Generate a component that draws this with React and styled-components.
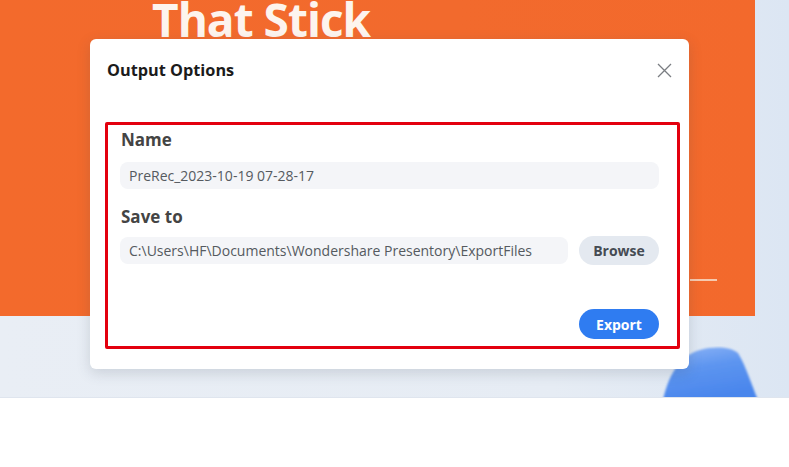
import React from "react";
import styled, { createGlobalStyle } from "styled-components";

const GlobalStyle = createGlobalStyle`
  html, body { margin: 0; padding: 0; background: #ffffff; }
  body { font-family: "Open Sans", "Liberation Sans", sans-serif; }
  * { box-sizing: border-box; }
`;

const Stage = styled.div`
  position: relative;
  width: 789px;
  height: 398px;
  overflow: hidden;
  background: linear-gradient(90deg, #e9eef5 0%, #e6ecf4 70%, #dce6f3 100%);
  border-bottom: 1px solid #dfe5ee;
`;

const Slide = styled.div`
  position: relative;
  width: 755px;
  height: 316px;
  overflow: hidden;
  background: linear-gradient(90deg, #f36a2c 0%, #f26a2d 60%, #f3692c 100%);
  padding-left: 152px;
`;

const Headline = styled.h1`
  margin: -4px 0 0;
  font-family: "Open Sans", sans-serif;
  font-weight: 700;
  font-size: 46px;
  line-height: 46px;
  letter-spacing: -1px;
  color: #fdf4ee;
`;

const Rule = styled.div`
  position: absolute;
  left: 690px;
  top: 279px;
  width: 27px;
  height: 2px;
  background: #f6c9ae;
`;

const Blob = styled.svg`
  position: absolute;
  left: 660px;
  top: 346px;
`;

const Dialog = styled.div`
  position: absolute;
  left: 90px;
  top: 39px;
  width: 599px;
  height: 330px;
  background: #ffffff;
  border-radius: 6px;
  box-shadow: 0 4px 14px rgba(60, 70, 90, 0.18);
  padding: 20px 9px 20px 15px;
  display: flex;
  flex-direction: column;
`;

const Header = styled.div`
  display: flex;
  align-items: center;
  justify-content: space-between;
  padding: 0 8px 0 2px;
  height: 22px;
`;

const Title = styled.h2`
  margin: 0;
  font-size: 16.3px;
  line-height: 22px;
  font-weight: 700;
  color: #1b1b1b;
`;

const Close = styled.button`
  border: 0;
  background: transparent;
  padding: 0;
  width: 15px;
  height: 15px;
  display: flex;
  cursor: pointer;
`;

const Annotated = styled.div`
  margin-top: 41px;
  flex: 1;
  border: 3px solid #e3000e;
  border-radius: 2px;
  padding: 5px 18px 7px 12px;
  display: flex;
  flex-direction: column;
`;

const Label = styled.div`
  margin-top: ${(p) => p.$top || 0}px;
  font-size: 17px;
  line-height: 20px;
  font-weight: 700;
  color: #444444;
  padding-left: 1px;
`;

const Field = styled.div`
  margin-top: ${(p) => p.$gap}px;
  display: flex;
  gap: 11px;
  align-items: center;
`;

const Input = styled.div`
  flex: 1;
  height: 27px;
  border-radius: 8px;
  background: #f4f5f8;
  padding: 0 9px;
  display: flex;
  align-items: center;
  font-size: 14px;
  color: #555a60;
  white-space: nowrap;
  overflow: hidden;
`;

const Pill = styled.button`
  border: 0;
  font-family: inherit;
  font-weight: 700;
  font-size: 14px;
  height: ${(p) => p.$h}px;
  width: 80px;
  border-radius: 15px;
  background: ${(p) => (p.$primary ? "#2f7cf1" : "#e4e9f0")};
  color: ${(p) => (p.$primary ? "#ffffff" : "#454b53")};
  cursor: pointer;
  padding: 0;
`;

const Spacer = styled.div`
  flex: 1;
`;

const Footer = styled.div`
  display: flex;
  justify-content: flex-end;
`;

export default function App() {
  return (
    <>
      <GlobalStyle />
      <Stage>
        <Slide>
          <Headline>That Stick</Headline>
          <Rule />
        </Slide>
        <Blob width="102" height="54" viewBox="0 0 102 54">
          <defs>
            <linearGradient id="blobFill" x1="0" y1="0" x2="0.3" y2="1">
              <stop offset="0" stopColor="#8db4f6" />
              <stop offset="0.45" stopColor="#5d95f0" />
              <stop offset="1" stopColor="#4a86ec" />
            </linearGradient>
            <filter id="soft" x="-10%" y="-10%" width="120%" height="120%">
              <feGaussianBlur stdDeviation="1.2" />
            </filter>
          </defs>
          <path
            d="M3 54 C 8 32, 18 10, 40 4 C 55 0, 70 1, 78 7 C 86 20, 92 40, 98 54 Z"
            fill="url(#blobFill)"
            filter="url(#soft)"
          />
        </Blob>
        <Dialog>
          <Header>
            <Title>Output Options</Title>
            <Close aria-label="Close">
              <svg width="15" height="15" viewBox="0 0 15 15">
                <path d="M1 1L14 14M14 1L1 14" stroke="#7a7d82" strokeWidth="1.3" fill="none" />
              </svg>
            </Close>
          </Header>
          <Annotated>
            <Label>Name</Label>
            <Field $gap={12}>
              <Input>PreRec_2023-10-19 07-28-17</Input>
            </Field>
            <Label $top={18}>Save to</Label>
            <Field $gap={9}>
              <Input>C:\Users\HF\Documents\Wondershare Presentory\ExportFiles</Input>
              <Pill $h={29}>Browse</Pill>
            </Field>
            <Spacer />
            <Footer>
              <Pill $primary $h={30}>Export</Pill>
            </Footer>
          </Annotated>
        </Dialog>
      </Stage>
    </>
  );
}
